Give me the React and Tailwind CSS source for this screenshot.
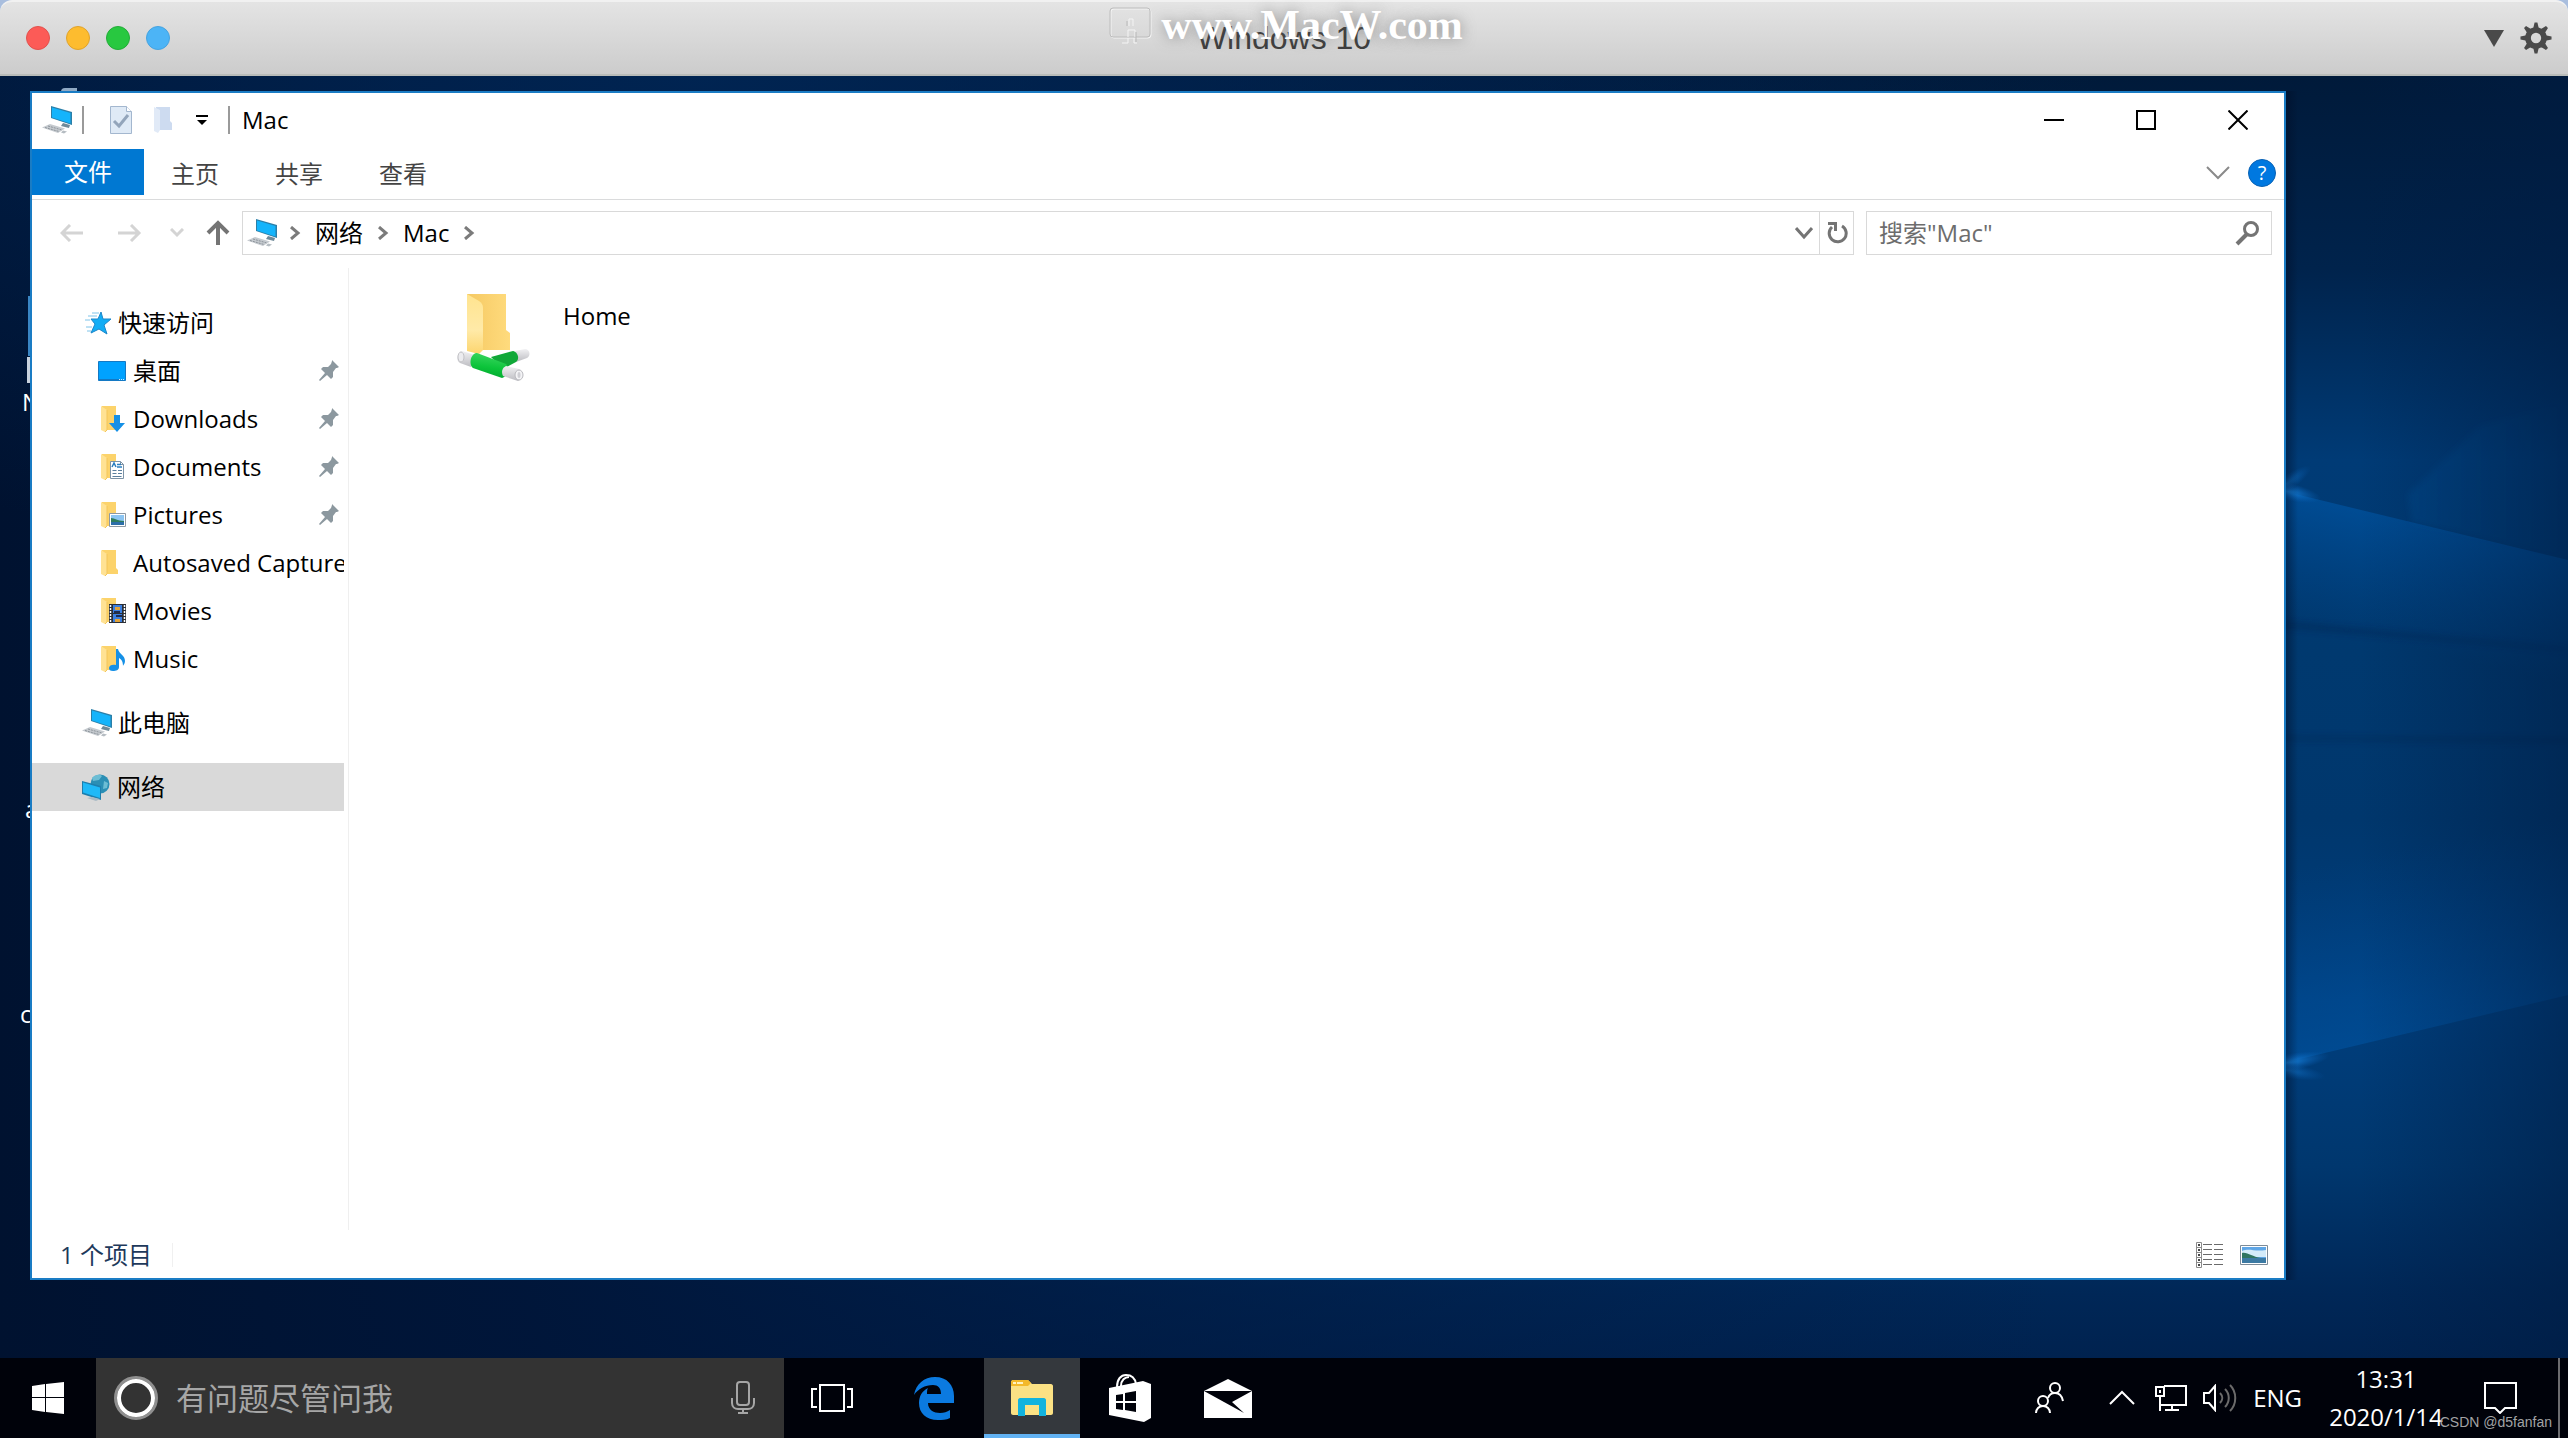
import { useState } from "react";

const quickAccess = [
  { name: "桌面", icon: DesktopIcon, pinned: true },
  { name: "Downloads", icon: DownloadsIcon, pinned: true },
  { name: "Documents", icon: DocumentsIcon, pinned: true },
  { name: "Pictures", icon: PicturesIcon, pinned: true },
  { name: "Autosaved Captures", icon: FolderIcon, pinned: false },
  { name: "Movies", icon: MoviesIcon, pinned: false },
  { name: "Music", icon: MusicIcon, pinned: false },
];

function PcIcon() {
  return (
    <svg width="30" height="28" viewBox="0 0 30 28" className="shrink-0">
      <path d="M9 0 30 6v13L9 12z" fill="#2b7fa8" />
      <path d="M10 1.500 28.500 7v10.500L10 11.500z" fill="#14b4fb" />
      <path d="M21 17l7 2-1 3-8-2z" fill="#6f8a99" />
      <path d="M0 21.500 8 18l15 4.500-7 4.500z" fill="#c5cacf" />
      <path d="M3 21.500l14 4M6 20l14 4" stroke="#8d949b" strokeDasharray="2 1" />
      <path d="M21 24.500l4 1-3 2-3-1z" fill="#b5bcc2" />
    </svg>
  );
}

function FolderShape() {
  return (
    <>
      <path d="M4 1h14v18l2 2v4H4z" fill="#fcd36b" />
      <path d="M3 1l6 4v20l-2 2-4-2z" fill="#ffe294" />
      <path d="M9 5v20l-2 2" fill="none" stroke="#f3c65a" />
    </>
  );
}

function FolderIcon() {
  return (
    <svg width="28" height="28" viewBox="0 0 28 28" className="shrink-0">
      <FolderShape />
    </svg>
  );
}

function DownloadsIcon() {
  return (
    <svg width="28" height="28" viewBox="0 0 28 28" className="shrink-0">
      <FolderShape />
      <path d="M16 10h6v8h5l-8 9-8-9h5z" fill="#1590e6" />
    </svg>
  );
}

function DocumentsIcon() {
  return (
    <svg width="28" height="28" viewBox="0 0 28 28" className="shrink-0">
      <FolderShape />
      <path d="M12.500 8.500h10l3 3v14h-13z" fill="#fff" stroke="#7d93a6" />
      <path d="M22.500 8.500v3h3" fill="none" stroke="#7d93a6" />
      <path d="M14 14l2-4 2 4M19 11.500h4M19 14h5" fill="none" stroke="#2b7fc0" strokeWidth="1.500" />
      <path d="M14.500 17.500h4M20 17.500h4M14.500 20.500h4M20 20.500h4M14.500 23.500h9" stroke="#5b7f9e" />
    </svg>
  );
}

function PicturesIcon() {
  return (
    <svg width="28" height="28" viewBox="0 0 28 28" className="shrink-0">
      <FolderShape />
      <path d="M11.500 12.500h16v13h-16z" fill="#fff" stroke="#8d99a3" />
      <path d="M13 14h13v10H13z" fill="#8cc5f2" />
      <path d="M13 17c4 0 6 3 13 3v1H13z" fill="#2f7d5c" />
      <path d="M13 21h13v3H13z" fill="#2c6ea8" />
    </svg>
  );
}

function MoviesIcon() {
  return (
    <svg width="28" height="28" viewBox="0 0 28 28" className="shrink-0">
      <FolderShape />
      <path d="M11 7h17v19H11z" fill="#2b2f36" />
      <path d="M12.500 8v18M26.500 8v18" stroke="#fff" strokeWidth="1.500" strokeDasharray="2 1" />
      <path d="M15 8h9v8h-9zM15 17h9v8h-9z" fill="#3b7fe0" />
      <path d="M17 10h5v3h-5zM17 22h5v3h-5z" fill="#e0a23b" />
      <path d="M16 14h6v2h-6zM18 18h6v2h-6z" fill="#1c2b52" />
    </svg>
  );
}

function MusicIcon() {
  return (
    <svg width="28" height="28" viewBox="0 0 28 28" className="shrink-0">
      <FolderShape />
      <path d="M18 4h2c1 5 7 6 7 12 0 3-2 4-2 5 0-5-2-7-4-8v9c0 3-3 4-6 4s-4-1-4-3c0-3 4-4 7-3z" fill="#1590e6" />
    </svg>
  );
}

function DesktopIcon() {
  return (
    <svg width="28" height="20" viewBox="0 0 28 20" className="shrink-0">
      <path d="M.5.5h27v19H.5z" fill="#00a2ff" stroke="#1479c4" />
      <path d="M1 18.500h20" stroke="#1479c4" />
      <path d="M21 18.500h6" stroke="#cfeaff" strokeDasharray="1 1" />
    </svg>
  );
}

function StarIcon() {
  return (
    <svg width="28" height="26" viewBox="0 0 28 26" className="shrink-0">
      <path d="M17 2l2 7h8l-7 6 3 9-8-5-8 4 4-9-4-5h7z" fill="#12adf5" stroke="#1c86c9" />
      <path d="M8 3h7M4 6h9M1 10h5M2 17h6M3 21h4" stroke="#7fc4ea" />
    </svg>
  );
}

function NetworkIcon() {
  return (
    <svg width="28" height="28" viewBox="0 0 28 28" className="shrink-0">
      <circle cx="18" cy="11" r="9.500" fill="#2b8fb5" />
      <path d="M10 5c3-4 8-4 10-2l-3 4-6 1zM22 8l4 2-1 5-4 1z" fill="#6cbdd4" />
      <path d="M0 8l19 5v14L0 21z" fill="#1d7fae" />
      <path d="M1 9.500 18 14.500v10.500L1 19.500z" fill="#1fb9f7" />
      <path d="M5 25l5-1 8 2-4 2z" fill="#a9bac4" />
    </svg>
  );
}

function PinIcon() {
  return (
    <svg width="22" height="22" viewBox="0 0 22 22" className="shrink-0">
      <path
        d="M14 0l7 7-2 1h-1l-3 4v5l-2 2-4-4-7 6-1-1 6-7-4-4 2-2h5l3-3 1-3z"
        fill="#8c989f"
      />
    </svg>
  );
}

function NetworkFolderIcon() {
  return (
    <svg width="74" height="88" viewBox="0 0 74 88">
      <defs>
        <linearGradient id="folderBack" x1="0" x2="1">
          <stop offset="0" stopColor="#f5c963" />
          <stop offset="1" stopColor="#ffdb7d" />
        </linearGradient>
        <linearGradient id="folderFlap" x1="0" x2="0" y1="0" y2="1">
          <stop offset="0" stopColor="#ffe48f" />
          <stop offset="0.600" stopColor="#ffeaa8" />
          <stop offset="1" stopColor="#fcd56e" />
        </linearGradient>
        <linearGradient id="pipe" x1="0.200" x2="0" y1="0" y2="1">
          <stop offset="0" stopColor="#35d45c" />
          <stop offset="0.500" stopColor="#0cc43a" />
          <stop offset="1" stopColor="#00a22e" />
        </linearGradient>
        <linearGradient id="plug" x1="0" x2="0" y1="0" y2="1">
          <stop offset="0" stopColor="#f1f1f3" />
          <stop offset="1" stopColor="#bdbdc2" />
        </linearGradient>
      </defs>
      <path d="M10 0h39v36l4 3v17H10z" fill="url(#folderBack)" />
      <path d="M10 0l12 7c3 2 4 4 4 7v42l-4 4-12-3z" fill="url(#folderFlap)" />
      <path d="M58 57l10-2c5 0 6 7 2 9l-11 4z" fill="url(#plug)" />
      <path d="M34 63l22-6c5 1 7 8 3 11L46 75z" fill="#10a838" />
      <path d="M5 57l13 4-4 12-11-4c-5-3-2-12 2-12z" fill="url(#plug)" />
      <ellipse cx="4" cy="63" rx="3" ry="5" fill="#ececef" stroke="#c2c2c6" />
      <path d="M20 59l29 11c4 4 1 13-4 14l-29-10c-5-4-2-15 4-15z" fill="url(#pipe)" />
      <path d="M49 72l13 3c5 2 4 11-1 12l-15-5c-2-4-1-8 3-10z" fill="url(#plug)" />
      <ellipse cx="62" cy="81" rx="4" ry="5" fill="#f4f4f6" stroke="#b9b9be" />
      <ellipse cx="62" cy="81" rx="1.500" ry="3" fill="#cfcfd4" />
    </svg>
  );
}

function Chevron() {
  return (
    <svg width="12" height="14" viewBox="0 0 12 14" className="shrink-0">
      <path d="M2 1l7 6-7 6" fill="none" stroke="#7b7b7b" strokeWidth="3" />
    </svg>
  );
}

// Dark blue light-beam desktop picture, stretched behind the windows
function Wallpaper() {
  return (
    <svg
      className="absolute inset-0 w-full h-full"
      viewBox="0 0 2568 1282"
      preserveAspectRatio="none"
    >
      <defs>
        <linearGradient id="sky" x1="0" x2="0" y1="0" y2="1">
          <stop offset="0" stopColor="#001a3a" />
          <stop offset="0.150" stopColor="#00234c" />
          <stop offset="0.300" stopColor="#003b76" />
          <stop offset="0.450" stopColor="#00396f" />
          <stop offset="0.580" stopColor="#00376d" />
          <stop offset="0.720" stopColor="#003f7e" />
          <stop offset="0.850" stopColor="#00376e" />
          <stop offset="0.950" stopColor="#002757" />
          <stop offset="1" stopColor="#00224f" />
        </linearGradient>
        <linearGradient id="leftShade" x1="0" x2="1">
          <stop offset="0" stopColor="#001230" />
          <stop offset="0.200" stopColor="#001538" stopOpacity="0.950" />
          <stop offset="0.800" stopColor="#001a44" stopOpacity="0" />
        </linearGradient>
        <radialGradient id="topLeft">
          <stop offset="0" stopColor="#002a5c" stopOpacity="0.700" />
          <stop offset="1" stopColor="#002a5c" stopOpacity="0" />
        </radialGradient>
        <linearGradient id="rightShade" x1="0" x2="1">
          <stop offset="0" stopColor="#001c42" stopOpacity="0" />
          <stop offset="1" stopColor="#001c42" stopOpacity="0.550" />
        </linearGradient>
        <linearGradient id="upperBeam" gradientUnits="userSpaceOnUse" x1="2350" y1="425" x2="2320" y2="550">
          <stop offset="0" stopColor="#0059ab" stopOpacity="0.600" />
          <stop offset="1" stopColor="#00509c" stopOpacity="0" />
        </linearGradient>
        <linearGradient id="lowerBeam" gradientUnits="userSpaceOnUse" x1="2350" y1="975" x2="2314" y2="790">
          <stop offset="0" stopColor="#0056a6" stopOpacity="0.550" />
          <stop offset="1" stopColor="#004a94" stopOpacity="0" />
        </linearGradient>
        <linearGradient id="facet" x1="0" x2="1">
          <stop offset="0" stopColor="#0a55a0" stopOpacity="0.300" />
          <stop offset="1" stopColor="#0a4f95" stopOpacity="0" />
        </linearGradient>
        <radialGradient id="spark">
          <stop offset="0" stopColor="#1684e0" />
          <stop offset="1" stopColor="#0a62ba" stopOpacity="0" />
        </radialGradient>
        <linearGradient id="shadow" x1="0" x2="1">
          <stop offset="0" stopColor="#000c24" stopOpacity="0.450" />
          <stop offset="1" stopColor="#000c24" stopOpacity="0" />
        </linearGradient>
        <filter id="soft" x="-20%" y="-50%" width="140%" height="200%">
          <feGaussianBlur stdDeviation="3" />
        </filter>
      </defs>
      <path d="M0 0h2568v1282H0z" fill="url(#sky)" />
      <path d="M0 0h2568v1282H0z" fill="url(#leftShade)" />
      <ellipse cx="700" cy="0" rx="1400" ry="500" fill="url(#topLeft)" />
      <path d="M2270 412 2568 484v150L2270 562z" fill="url(#upperBeam)" />
      <path d="M2270 990 2568 919V740L2270 790z" fill="url(#lowerBeam)" />
      <path d="M2408 418 2480 350 2568 325v155L2412 446z" fill="url(#facet)" filter="url(#soft)" />
      <path d="M2270 544l298 28-1 3-297-24zM2270 660l298 2v5l-298-3z" fill="#00234d" opacity="0.400" filter="url(#soft)" />
      <ellipse cx="2286" cy="415" rx="36" ry="9" fill="url(#spark)" transform="rotate(13 2286 415)" />
      <ellipse cx="2286" cy="408" rx="30" ry="8" fill="url(#spark)" opacity="0.600" transform="rotate(-35 2286 408)" />
      <ellipse cx="2286" cy="987" rx="44" ry="9" fill="url(#spark)" transform="rotate(-10 2286 987)" />
      <ellipse cx="2286" cy="994" rx="40" ry="8" fill="url(#spark)" opacity="0.600" transform="rotate(10 2286 994)" />
      <path d="M2360 0h208v1282h-208z" fill="url(#rightShade)" />
      <path d="M2286 15h12v1189h-12z" fill="url(#shadow)" />
    </svg>
  );
}

function MacTitleBar() {
  return (
    <header className="relative h-19 shrink-0 flex items-center justify-between px-6.5 rounded-t-xl border-t-2 border-[#f1f1f1] border-b-2 border-b-[#b9bcb9] bg-linear-to-b from-[#e4e4e4] to-[#cccccc]">
      <div className="flex gap-4">
        <button aria-label="Close" className="size-6 rounded-full bg-[#fc5b57] border border-[#e2514d]" />
        <button aria-label="Minimize" className="size-6 rounded-full bg-[#fdbc2f] border border-[#e0a32c]" />
        <button aria-label="Zoom" className="size-6 rounded-full bg-[#28c840] border border-[#23ac38]" />
        <button aria-label="Coherence" className="size-6 rounded-full bg-[#4cb4f6] border border-[#45a3e0]" />
      </div>
      <div className="flex items-center gap-4 -mr-2.5">
        <button aria-label="Menu">
          <svg width="20" height="17" viewBox="0 0 20 17">
            <path d="M0 0h20L10 17z" fill="#4a4a4a" />
          </svg>
        </button>
        <button aria-label="Settings">
          <svg width="32" height="32" viewBox="-17 -17 34 34">
            <g fill="#4a4a4a">
              <path d="M-3-10-1.500-16.500h3L3-10zM-3 10-1.500 16.500h3L3 10zM-10-3-16.500-1.500v3L-10 3zM10-3 16.500-1.500v3L10 3z" />
              <path
                d="M-3-10-1.500-16.500h3L3-10zM-3 10-1.500 16.500h3L3 10zM-10-3-16.500-1.500v3L-10 3zM10-3 16.500-1.500v3L10 3z"
                transform="rotate(45)"
              />
            </g>
            <circle r="8.500" fill="none" stroke="#4a4a4a" strokeWidth="6" />
          </svg>
        </button>
      </div>
      <h1 className="absolute inset-x-0 top-4 text-center text-[32px] leading-10 text-[#3f3f3f] font-['Liberation_Sans',sans-serif]">
        Windows 10
      </h1>
      <div className="absolute inset-x-0 top-1 flex items-center justify-center gap-2 pl-1">
        <svg width="44" height="38" viewBox="0 0 44 38" fill="none">
          <rect x="2" y="3" width="40" height="29" rx="3" stroke="#f4f4f4" strokeWidth="1" />
          <rect x="1" y="2" width="40" height="29" rx="3" stroke="#bdbdbd" strokeWidth="1" />
          <path d="M20 20v-7h4v7M19 31v-7h7v7M13 37h6v-5M25 32v5h3" stroke="#f4f4f4" strokeWidth="1" />
          <path d="M18 20v-5M27 26v10" stroke="#b8b8b8" />
        </svg>
        <span className="text-[42px] leading-9 font-bold text-white font-['Liberation_Serif',serif] [text-shadow:0_0_14px_rgba(90,90,90,0.6)]">
          www.MacW.com
        </span>
      </div>
    </header>
  );
}

function WindowCaption() {
  return (
    <div className="h-14 shrink-0 flex items-center pl-2.5 pr-9 pb-0.5">
      <PcIcon />
      <div className="w-0.5 h-7 ml-2.5 bg-[#9a9a9a]" />
      <button aria-label="Properties" className="ml-6.5">
        <svg width="22" height="28" viewBox="0 0 22 28">
          <path d="M.5.5h16l5 5v22H.5z" fill="#dfeaf6" stroke="#a3b7cf" />
          <path d="M16.500.5v5h5" fill="#fff" stroke="#a3b7cf" />
          <path d="M4 15l5 5 9-11" fill="none" stroke="#93a5bb" strokeWidth="3" />
        </svg>
      </button>
      <button aria-label="New folder" className="ml-5.5">
        <svg width="20" height="28" viewBox="0 0 20 28">
          <path d="M2 1h14v14l2 2v7H2z" fill="#cddbf0" />
          <path d="M0 1l6 3v20l-2 3-4-2z" fill="#e1eaf7" />
        </svg>
      </button>
      <button aria-label="Customize toolbar" className="ml-5.5">
        <svg width="12" height="11" viewBox="0 0 12 11">
          <path d="M0 1h12" stroke="#000" strokeWidth="2" />
          <path d="M1 5h10l-5 5z" fill="#000" />
        </svg>
      </button>
      <div className="w-0.5 h-7 ml-5 bg-[#9a9a9a]" />
      <h2 className="ml-3 text-2xl text-black">Mac</h2>
      <div className="ml-auto flex items-center gap-18">
        <button aria-label="Minimize">
          <svg width="20" height="20" viewBox="0 0 20 20">
            <path d="M0 10h20" stroke="#000" strokeWidth="2" />
          </svg>
        </button>
        <button aria-label="Maximize">
          <svg width="20" height="20" viewBox="0 0 20 20">
            <path d="M1 1h18v18H1z" fill="none" stroke="#000" strokeWidth="2" />
          </svg>
        </button>
        <button aria-label="Close">
          <svg width="20" height="20" viewBox="0 0 20 20">
            <path d="M.5.5l19 19M19.500.5l-19 19" stroke="#000" strokeWidth="2" />
          </svg>
        </button>
      </div>
    </div>
  );
}

function Ribbon() {
  return (
    <nav className="h-[51px] shrink-0 flex items-start border-b border-[#dadbdc] pr-2 text-2xl text-[#444]">
      <button className="w-28 h-[46px] bg-[#0078d2] text-white">文件</button>
      <div className="flex -ml-px">
        <button className="px-7 h-[50px]">主页</button>
        <button className="px-7 h-[50px]">共享</button>
        <button className="px-7 h-[50px]">查看</button>
      </div>
      <div className="ml-auto h-12 flex items-center gap-4.5">
        <button aria-label="Expand ribbon">
          <svg width="24" height="14" viewBox="0 0 24 14">
            <path d="M1 1l11 11L23 1" fill="none" stroke="#8a8a8a" strokeWidth="2" />
          </svg>
        </button>
        <button
          aria-label="Help"
          className="size-7 rounded-full border border-[#0a62b4] bg-[#0078e0] text-white text-xl leading-6"
        >
          ?
        </button>
      </div>
    </nav>
  );
}

function AddressBar() {
  const [query, setQuery] = useState("");

  return (
    <div className="h-17 shrink-0 flex items-center pl-7 pr-3 pb-0.5">
      <button aria-label="Back">
        <svg width="24" height="18" viewBox="0 0 24 18">
          <path d="M23 9H3M10 1L2 9l8 8" fill="none" stroke="#d4d4d4" strokeWidth="3" />
        </svg>
      </button>
      <button aria-label="Forward" className="ml-8.5">
        <svg width="24" height="18" viewBox="0 0 24 18">
          <path d="M0 9h20M13 1l8 8-8 8" fill="none" stroke="#d4d4d4" strokeWidth="3" />
        </svg>
      </button>
      <button aria-label="Recent locations" className="ml-7">
        <svg width="14" height="10" viewBox="0 0 14 10">
          <path d="M1 1l6 6 6-6" fill="none" stroke="#d4d4d4" strokeWidth="3" />
        </svg>
      </button>
      <button aria-label="Up" className="ml-5.5">
        <svg width="24" height="26" viewBox="0 0 24 26">
          <path d="M12 25V3M2 13L12 3l10 10" fill="none" stroke="#747474" strokeWidth="4" />
        </svg>
      </button>
      <div className="ml-3 h-11 flex-1 flex items-center border border-[#d9d9d9] pl-1 text-2xl text-black">
        <PcIcon />
        <div className="flex items-center gap-3.5 ml-3">
          <Chevron />
          <button>网络</button>
          <Chevron />
          <button>Mac</button>
          <Chevron />
        </div>
        <button aria-label="Previous locations" className="ml-auto px-1.5">
          <svg width="18" height="14" viewBox="0 0 18 14">
            <path d="M1 2l8 9 8-9" fill="none" stroke="#747474" strokeWidth="3" />
          </svg>
        </button>
        <button aria-label="Refresh" className="h-full w-8.5 flex items-center justify-center border-l border-[#d9d9d9]">
          <svg width="22" height="24" viewBox="0 0 22 24">
            <path d="M16 5a8.500 8.500 0 1 1-10 1" fill="none" stroke="#747474" strokeWidth="3" />
            <path d="M2 2.500h7.500V10" fill="none" stroke="#747474" strokeWidth="3" />
          </svg>
        </button>
      </div>
      <label className="ml-3 h-11 w-[406px] flex items-center border border-[#d9d9d9] pl-3 pr-2.5">
        <input
          type="text"
          aria-label="搜索"
          value={query}
          onChange={(e) => setQuery(e.target.value)}
          placeholder={'搜索"Mac"'}
          className="flex-1 min-w-0 text-2xl text-black placeholder:text-[#6d6d6d] outline-none"
        />
        <svg width="26" height="26" viewBox="0 0 26 26">
          <circle cx="16" cy="9" r="6.500" fill="none" stroke="#747474" strokeWidth="3" />
          <path d="M12 14L2 24" stroke="#747474" strokeWidth="4" />
        </svg>
      </label>
    </div>
  );
}

function Sidebar() {
  return (
    <aside className="w-[317px] shrink-0 border-r border-[#efefef] pt-[31px] text-2xl text-black">
      <button className="w-[312px] h-12 flex items-center gap-1.5 pl-13">
        <StarIcon />
        快速访问
      </button>
      <ul>
        {quickAccess.map((item) => (
          <li key={item.name}>
            <button className="w-[312px] h-12 flex items-center pl-16.5 pr-1 overflow-hidden">
              <item.icon />
              <span className={item.pinned ? "ml-[7px] flex-1 text-left" : "ml-[7px] -mr-1 flex-1 text-left whitespace-nowrap overflow-hidden"}>
                {item.name}
              </span>
              {item.pinned && <PinIcon />}
            </button>
          </li>
        ))}
      </ul>
      <button className="mt-4 w-[312px] h-12 flex items-center gap-1.5 pl-12.5">
        <PcIcon />
        此电脑
      </button>
      <button className="mt-4 w-[312px] h-12 flex items-center gap-[7px] pl-12.5 bg-[#d9d9d9]">
        <NetworkIcon />
        网络
      </button>
    </aside>
  );
}

function StatusBar() {
  return (
    <footer className="h-12 shrink-0 flex items-center pl-7 pr-4 pt-0.5 text-2xl text-[#1e395b]">
      <span>1 个项目</span>
      <div className="w-px h-6 ml-5 bg-[#f0f0f0]" />
      <div className="ml-auto flex items-center gap-4">
        <button aria-label="Details view">
          <svg width="28" height="26" viewBox="0 0 28 26" fill="none">
            <path d="M.5.5h5v25h-5zM.5 5.500h5M.5 10.500h5M.5 15.500h5M.5 20.500h5" stroke="#8a8a8a" />
            <path d="M3 2v2M3 7v2M3 12v2M3 17v2M3 22v2" stroke="#444" strokeWidth="2" />
            <path
              d="M7 2.500h9M18 2.500h9M7 7.500h9M18 7.500h9M7 12.500h9M18 12.500h9M7 17.500h9M18 17.500h9M7 22.500h9M18 22.500h9"
              stroke="#6a6a6a"
            />
          </svg>
        </button>
        <button aria-label="Large icons view">
          <svg width="28" height="20" viewBox="0 0 28 20">
            <path d="M.5.5h27v19H.5z" fill="#fff" stroke="#7c8b98" />
            <path d="M2 2h24v16H2z" fill="#5fa6e6" />
            <path d="M2 6c8-3 12 1 24-1v7H2z" fill="#d3ebf9" />
            <path d="M2 8c6-1 10 4 19 5H2z" fill="#2f7560" />
            <path d="M2 13h24v5H2z" fill="#3c7aa3" />
          </svg>
        </button>
      </div>
    </footer>
  );
}

function ExplorerWindow() {
  return (
    <main className="relative flex-1 flex flex-col min-w-0 bg-white border-2 border-[#1a7cc4]">
      <WindowCaption />
      <Ribbon />
      <AddressBar />
      <div className="flex-1 min-h-0 flex">
        <Sidebar />
        <section className="flex-1 pl-27 pt-6.5">
          <button className="flex items-start gap-8 text-2xl text-black">
            <NetworkFolderIcon />
            <span className="pt-1.5">Home</span>
          </button>
        </section>
      </div>
      <StatusBar />
    </main>
  );
}

function Taskbar() {
  return (
    <footer className="h-20 shrink-0 flex items-stretch bg-[#00020a] text-white">
      <button aria-label="Start" className="w-24 flex items-center justify-center">
        <svg width="32" height="32" viewBox="0 0 32 32">
          <path d="M0 4l13-2v13H0zM14 2l18-2v15H14zM0 16h13v14L0 28zM14 16h18v16l-18-2z" fill="#fff" />
        </svg>
      </button>
      <label className="w-[688px] flex items-center bg-[#333333] pl-4.5 pr-7">
        <svg width="44" height="44" viewBox="0 0 44 44">
          <circle cx="22" cy="22" r="20.500" fill="none" stroke="#8f8f8f" strokeWidth="3" />
          <circle cx="22" cy="22" r="17" fill="none" stroke="#fff" strokeWidth="4" />
        </svg>
        <input
          type="text"
          aria-label="Cortana"
          placeholder="有问题尽管问我"
          className="ml-4.5 flex-1 min-w-0 text-[31px] text-white placeholder:text-[#a6a6a6] outline-none"
        />
        <svg width="26" height="34" viewBox="0 0 26 34" fill="none" stroke="#a6a6a6" strokeWidth="2">
          <rect x="7" y="1" width="12" height="23" rx="3" />
          <path d="M2 17v5c0 4 3 6 6 6h10c3 0 6-2 6-6v-5M13 28v4M8 32h10" />
        </svg>
      </label>
      <button aria-label="Task view" className="w-24 flex items-center justify-center">
        <svg width="42" height="28" viewBox="0 0 42 28" fill="none" stroke="#fff" strokeWidth="2">
          <path d="M9 1h24v26H9zM6 5H1v18h5M36 5h5v18h-5" />
        </svg>
      </button>
      <button aria-label="Edge" className="w-26 flex items-center justify-center pl-1">
        <svg width="40" height="43" viewBox="0 0 40 43">
          <path
            d="M0 18C2 7 10 0 21 0c12 0 19 8 19 19v7H14c0 7 6 10 12 10 4 0 7-1 10-3v8c-4 2-8 2-12 2C12 43 5 36 5 26c0-7 3-12 9-15-1 2-1 3-1 6h14c0-6-3-9-8-9C11 8 4 12 0 18z"
            fill="#0b7ae0"
          />
        </svg>
      </button>
      <button
        aria-label="File Explorer"
        className="w-24 flex items-center justify-center bg-[#34383d] border-b-4 border-[#62b2f2] pt-1"
      >
        <svg width="42" height="36" viewBox="0 0 42 36">
          <path d="M0 2c0-1 1-2 2-2h15l4 4h19c1 0 2 1 2 2v27c0 1-1 2-2 2H2c-1 0-2-1-2-2z" fill="#fbe184" />
          <path d="M0 2c0-1 1-2 2-2h15l3 3-3 3H0z" fill="#f3b92b" />
          <path d="M2 2h3v2H2zM6 2h6v2H6z" fill="#fff2c0" />
          <path d="M7 36V20c0-1 1-2 2-2h24c1 0 2 1 2 2v16h-7V25H14v11z" fill="#12b3de" />
        </svg>
      </button>
      <button aria-label="Store" className="w-25 flex items-center justify-center">
        <svg width="42" height="48" viewBox="0 0 42 48">
          <path d="M8 13C8 5 12 1 17 1s9 3 10 9M12 12c0-6 4-9 8-9" fill="none" stroke="#fff" strokeWidth="2" />
          <path d="M0 14l34-7 8 3v34l-7 4-35-7z" fill="#fff" />
          <path d="M7 21l7-1v7H7zM16 19l11-2v10H16zM7 29h7v7l-7-1zM16 29h11v9l-11-2z" fill="#00020a" />
        </svg>
      </button>
      <button aria-label="Mail" className="w-24 flex items-center justify-center">
        <svg width="48" height="39" viewBox="0 0 48 39">
          <path d="M0 12L24 0l24 12v27H0z" fill="#fff" />
          <path d="M0 12h48L28 23l12 11z" fill="#00020a" />
        </svg>
      </button>

      <div className="ml-auto flex items-center text-2xl">
        <button aria-label="People">
          <svg width="30" height="32" viewBox="0 0 30 32" fill="none" stroke="#fff" strokeWidth="2">
            <circle cx="20" cy="6" r="5" />
            <path d="M13 16c1-3 4-5 7-5 4 0 7 3 8 8" />
            <circle cx="8" cy="19" r="5" />
            <path d="M1 31c0-4 3-7 7-7s7 3 7 7" />
          </svg>
        </button>
        <button aria-label="Show hidden icons" className="ml-11">
          <svg width="26" height="16" viewBox="0 0 26 16">
            <path d="M1 14L13 2l12 12" fill="none" stroke="#fff" strokeWidth="2" />
          </svg>
        </button>
        <button aria-label="Network" className="ml-5">
          <svg width="32" height="28" viewBox="0 0 32 28" fill="none" stroke="#fff" strokeWidth="2">
            <path d="M9 2h22v19H5M1 3h8v9H1zM5 12v15M17 21v6M10 26h14" />
            <path d="M5 6v3" />
          </svg>
        </button>
        <button aria-label="Volume" className="ml-4">
          <svg width="34" height="28" viewBox="0 0 34 28" fill="none" strokeWidth="2">
            <path d="M1 9h5l6-7v24l-6-7H1z" stroke="#fff" />
            <path d="M17 9c3 3 3 7 0 10M22 5c5 5 5 13 0 18M27 1c7 7 7 19 0 26" stroke="#6b6b6b" />
          </svg>
        </button>
        <button className="ml-4">ENG</button>
        <button className="w-36 ml-3 leading-9.5 text-center">
          <time className="block">13:31</time>
          <span className="block">2020/1/14</span>
        </button>
        <button aria-label="Notifications" className="ml-6.5">
          <svg width="34" height="32" viewBox="0 0 34 32">
            <path d="M1 1h31v25H21l-5 5-5-5H1z" fill="none" stroke="#fff" strokeWidth="2" />
          </svg>
        </button>
        <div className="w-0.5 h-full ml-10 mr-2 bg-[#6c6c6f]" />
      </div>
    </footer>
  );
}

export default function App() {
  return (
    <div className="h-screen flex flex-col overflow-hidden bg-[#a9bede] font-['Open_Sans','Noto_Sans_CJK_SC',sans-serif]">
      <MacTitleBar />
      <div className="relative flex-1 min-h-0 flex pt-[15px] pb-[78px] pl-[30px] pr-[282px]">
        <Wallpaper />
        {/* desktop shortcuts peeking out behind the window */}
        <div className="absolute inset-y-0 left-0 w-18 text-white text-2xl leading-6">
          <span className="absolute left-[61px] top-3 w-4 h-2 rounded-tl bg-[#8fa9c4]" />
          <span className="absolute left-7 top-55 w-1 h-15 bg-[#3a86c4]" />
          <span className="absolute left-[27px] top-[281px] w-1 h-6.5 bg-[#c9d3de]" />
          <span className="absolute left-[22px] top-[314px]">N</span>
          <span className="absolute left-[25px] top-[721px]">a</span>
          <span className="absolute left-[20px] top-[926px]">c</span>
        </div>
        <ExplorerWindow />
      </div>
      <div className="relative">
        <Taskbar />
        <span className="absolute right-4 bottom-2 text-sm leading-4 text-[#a2a2a4] font-['Liberation_Sans',sans-serif]">
          CSDN @d5fanfan
        </span>
      </div>
    </div>
  );
}
